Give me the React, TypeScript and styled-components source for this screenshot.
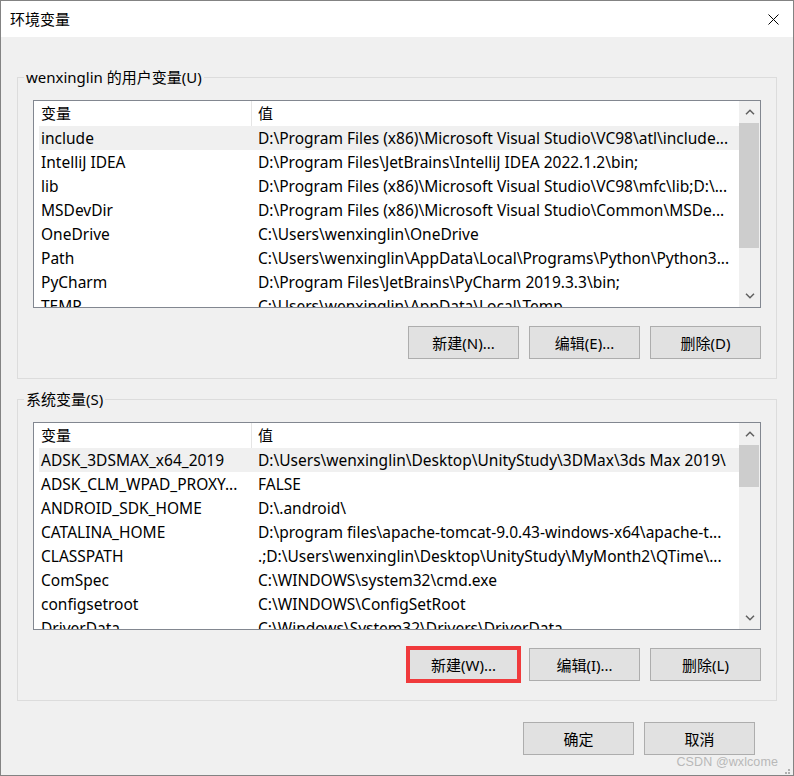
import React from "react";
import styled, { createGlobalStyle } from "styled-components";

const Global = createGlobalStyle`
  html, body { margin: 0; padding: 0; background: #ffffff; }
  * { box-sizing: border-box; }
  body {
    font-family: "Segoe UI", "Noto Sans", "Noto Sans CJK SC", sans-serif;
    font-size: 15px;
    color: #000;
  }
`;

const Window = styled.div`
  position: relative;
  width: 794px;
  height: 776px;
  border: 1px solid #838383;
  background: #f0f0f0;
  display: flex;
  flex-direction: column;
  overflow: hidden;
`;

const TitleBar = styled.div`
  height: 36px;
  flex: 0 0 36px;
  background: #ffffff;
  display: flex;
  align-items: center;
  justify-content: space-between;
  padding: 0 14px 0 9px;
`;

const Title = styled.div`
  font-size: 15px;
  line-height: 20px;
  margin-top: -1px;
`;

const CloseBox = styled.div`
  width: 12px;
  height: 12px;
  display: flex;
  align-items: center;
  justify-content: center;
`;

const Body = styled.div`
  flex: 1;
  display: flex;
  flex-direction: column;
  padding: 30px 16px 0 16px;
`;

const Group = styled.fieldset<{ $spaced?: boolean }>`
  margin: ${(p) => (p.$spaced ? "10px" : "0")} 0 0 0;
  padding: 13px 15px 19px 15px;
  border: 1px solid #dcdcdc;
  min-width: 0;
  display: flex;
  flex-direction: column;
`;

const Legend = styled.legend`
  margin-left: -9px;
  padding: 0 2px;
  line-height: 20px;
  height: 20px;
  font-size: 15px;
`;

const ListBox = styled.div`
  height: 208px;
  border: 1px solid #828790;
  background: #ffffff;
  display: flex;
  overflow: hidden;
`;

const ListMain = styled.div`
  flex: 1;
  min-width: 0;
  display: flex;
  flex-direction: column;
  overflow: hidden;
`;

const HeaderRow = styled.div`
  height: 25px;
  flex: 0 0 25px;
  display: grid;
  grid-template-columns: 218px 1fr;
`;

const HeaderCell = styled.div<{ $sep?: boolean }>`
  padding-left: ${(p) => (p.$sep ? "7px" : "6px")};
  border-right: ${(p) => (p.$sep ? "1px solid #e5e5e5" : "none")};
  line-height: 24px;
  white-space: nowrap;
`;

const Row = styled.div<{ $selected?: boolean }>`
  height: 24px;
  flex: 0 0 24px;
  margin-left: 5px;
  display: grid;
  grid-template-columns: 213px 1fr;
  background: ${(p) => (p.$selected ? "#f0f0f0" : "transparent")};
  line-height: 24px;
  font-size: 15.5px;
`;

const NameCell = styled.div`
  padding-left: 2px;
  white-space: nowrap;
  overflow: hidden;
`;

const ValueCell = styled.div`
  padding-left: 6px;
  white-space: nowrap;
  overflow: hidden;
`;

const ScrollBar = styled.div`
  width: 21px;
  flex: 0 0 21px;
  background: #f0f0f0;
  display: flex;
  flex-direction: column;
`;

const Arrow = styled.div`
  height: 22px;
  flex: 0 0 22px;
  display: flex;
  align-items: center;
  justify-content: center;
`;

const Track = styled.div`
  flex: 1;
  display: flex;
  flex-direction: column;
`;

const Thumb = styled.div<{ $h: number }>`
  height: ${(p) => p.$h}px;
  width: 20px;
  background: #cdcdcd;
`;

const ButtonRow = styled.div<{ $footer?: boolean }>`
  display: flex;
  justify-content: flex-end;
  gap: 10px;
  margin-top: ${(p) => (p.$footer ? "21px" : "18px")};
  padding-right: ${(p) => (p.$footer ? "22px" : "0")};
`;

const Button = styled.button<{ $focused?: boolean; $marked?: boolean }>`
  width: 111px;
  height: 33px;
  background: #e1e1e1;
  border: 1px solid ${(p) => (p.$focused ? "#0078d7" : "#adadad")};
  font-family: inherit;
  font-size: 15px;
  color: #000;
  padding: 0;
  line-height: 20px;
  outline: ${(p) => (p.$marked ? "4px solid #f03a3c" : "none")};
  outline-offset: -2px;
`;

const Watermark = styled.div`
  position: absolute;
  right: 15px;
  bottom: 6px;
  font-family: "Liberation Sans", Arial, sans-serif;
  font-size: 12.5px;
  color: #b8b8b8;
  letter-spacing: 0.1px;
`;

const Grip = styled.div`
  position: absolute;
  right: 2px;
  bottom: 2px;
  width: 11px;
  height: 11px;
`;

type Item = [string, string];

const userVars: Item[] = [
  ["include", "D:\\Program Files (x86)\\Microsoft Visual Studio\\VC98\\atl\\include..."],
  ["IntelliJ IDEA", "D:\\Program Files\\JetBrains\\IntelliJ IDEA 2022.1.2\\bin;"],
  ["lib", "D:\\Program Files (x86)\\Microsoft Visual Studio\\VC98\\mfc\\lib;D:\\..."],
  ["MSDevDir", "D:\\Program Files (x86)\\Microsoft Visual Studio\\Common\\MSDe..."],
  ["OneDrive", "C:\\Users\\wenxinglin\\OneDrive"],
  ["Path", "C:\\Users\\wenxinglin\\AppData\\Local\\Programs\\Python\\Python3..."],
  ["PyCharm", "D:\\Program Files\\JetBrains\\PyCharm 2019.3.3\\bin;"],
  ["TEMP", "C:\\Users\\wenxinglin\\AppData\\Local\\Temp"],
];

const sysVars: Item[] = [
  ["ADSK_3DSMAX_x64_2019", "D:\\Users\\wenxinglin\\Desktop\\UnityStudy\\3DMax\\3ds Max 2019\\"],
  ["ADSK_CLM_WPAD_PROXY...", "FALSE"],
  ["ANDROID_SDK_HOME", "D:\\.android\\"],
  ["CATALINA_HOME", "D:\\program files\\apache-tomcat-9.0.43-windows-x64\\apache-t..."],
  ["CLASSPATH", ".;D:\\Users\\wenxinglin\\Desktop\\UnityStudy\\MyMonth2\\QTime\\..."],
  ["ComSpec", "C:\\WINDOWS\\system32\\cmd.exe"],
  ["configsetroot", "C:\\WINDOWS\\ConfigSetRoot"],
  ["DriverData", "C:\\Windows\\System32\\Drivers\\DriverData"],
];

const Chevron = ({ up }: { up?: boolean }) => (
  <svg width="10" height="6" viewBox="0 0 10 6">
    <path
      d={up ? "M1 5.2 L5 1.2 L9 5.2" : "M1 0.8 L5 4.8 L9 0.8"}
      fill="none"
      stroke="#606060"
      strokeWidth="1.5"
    />
  </svg>
);

const VarList = ({ items, thumb }: { items: Item[]; thumb: number }) => (
  <ListBox>
    <ListMain>
      <HeaderRow>
        <HeaderCell $sep>变量</HeaderCell>
        <HeaderCell>值</HeaderCell>
      </HeaderRow>
      {items.map(([n, v], i) => (
        <Row key={n} $selected={i === 0}>
          <NameCell>{n}</NameCell>
          <ValueCell>{v}</ValueCell>
        </Row>
      ))}
    </ListMain>
    <ScrollBar>
      <Arrow>
        <Chevron up />
      </Arrow>
      <Track>
        <Thumb $h={thumb} />
      </Track>
      <Arrow>
        <Chevron />
      </Arrow>
    </ScrollBar>
  </ListBox>
);

export default function App() {
  return (
    <>
      <Global />
      <Window>
        <TitleBar>
          <Title>环境变量</Title>
          <CloseBox>
            <svg width="11" height="11" viewBox="0 0 11 11">
              <path d="M0.5 0.5 L10.5 10.5 M10.5 0.5 L0.5 10.5" stroke="#000" strokeWidth="1" />
            </svg>
          </CloseBox>
        </TitleBar>
        <Body>
          <Group>
            <Legend>wenxinglin 的用户变量(U)</Legend>
            <VarList items={userVars} thumb={125} />
            <ButtonRow>
              <Button>新建(N)...</Button>
              <Button>编辑(E)...</Button>
              <Button>删除(D)</Button>
            </ButtonRow>
          </Group>
          <Group $spaced>
            <Legend>系统变量(S)</Legend>
            <VarList items={sysVars} thumb={42} />
            <ButtonRow>
              <Button $focused $marked>新建(W)...</Button>
              <Button>编辑(I)...</Button>
              <Button>删除(L)</Button>
            </ButtonRow>
          </Group>
          <ButtonRow $footer>
            <Button>确定</Button>
            <Button>取消</Button>
          </ButtonRow>
        </Body>
        <Watermark>CSDN @wxlcome</Watermark>
        <Grip>
          <svg width="11" height="11" viewBox="0 0 11 11">
            {[
              [8, 2],
              [5, 5],
              [8, 5],
              [2, 8],
              [5, 8],
              [8, 8],
            ].map(([x, y]) => (
              <rect key={`${x}-${y}`} x={x} y={y} width="2" height="2" fill="#b0b0b0" />
            ))}
          </svg>
        </Grip>
      </Window>
    </>
  );
}
